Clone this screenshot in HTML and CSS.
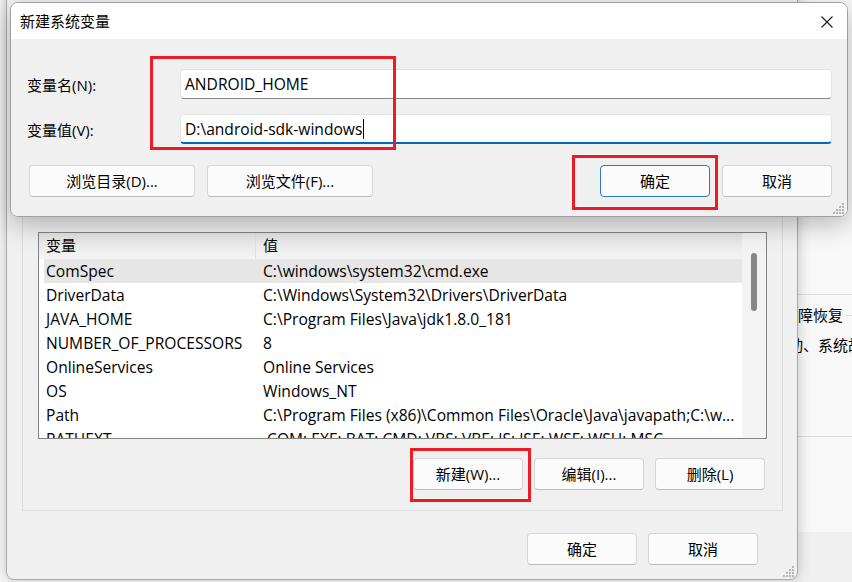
FILE: index.html
```html
<!DOCTYPE html>
<html lang="zh-CN">
<head>
    <meta charset="UTF-8">
    <meta name="viewport" content="width=device-width, initial-scale=1.0">
    <title>新建系统变量</title>
    <link rel="stylesheet" href="styles.css">
</head>
<body>
<div class="desktop">

    <!-- janela de trás (configurações do sistema) -->
    <div class="back-window">
        <div class="back-rule"></div>
        <div class="back-legend"><span>故障恢复</span><i></i></div>
        <div class="back-text">启动、系统故障</div>
        <div class="back-rule back-rule-low"></div>
        <div class="back-band"></div>
    </div>

    <!-- 环境变量 -->
    <div class="env-dialog">
        <div class="group">
            <div class="group-label">系统变量(S)</div>
            <div class="list">
                <div class="list-main">
                    <div class="list-head">
                        <div class="col-name">变量</div>
                        <div class="col-value">值</div>
                    </div>
                    <div class="row selected"><div class="col-name">ComSpec</div><div class="col-value">C:\windows\system32\cmd.exe</div></div>
                    <div class="row"><div class="col-name">DriverData</div><div class="col-value">C:\Windows\System32\Drivers\DriverData</div></div>
                    <div class="row"><div class="col-name">JAVA_HOME</div><div class="col-value">C:\Program Files\Java\jdk1.8.0_181</div></div>
                    <div class="row"><div class="col-name">NUMBER_OF_PROCESSORS</div><div class="col-value">8</div></div>
                    <div class="row"><div class="col-name">OnlineServices</div><div class="col-value">Online Services</div></div>
                    <div class="row"><div class="col-name">OS</div><div class="col-value">Windows_NT</div></div>
                    <div class="row"><div class="col-name">Path</div><div class="col-value">C:\Program Files (x86)\Common Files\Oracle\Java\javapath;C:\w...</div></div>
                    <div class="row"><div class="col-name">PATHEXT</div><div class="col-value">.COM;.EXE;.BAT;.CMD;.VBS;.VBE;.JS;.JSE;.WSF;.WSH;.MSC</div></div>
                </div>
                <div class="scrollbar"><div class="thumb"></div></div>
            </div>
            <div class="btn-row group-buttons">
                <button class="btn">新建(W)...</button>
                <button class="btn">编辑(I)...</button>
                <button class="btn">删除(L)</button>
            </div>
        </div>
        <div class="btn-row footer">
            <button class="btn">确定</button>
            <button class="btn">取消</button>
        </div>
        <svg class="grip" width="12" height="12" viewBox="0 0 12 12">
            <g fill="#b4b4b4">
                <rect x="9" y="0" width="2" height="2"/>
                <rect x="6" y="3" width="2" height="2"/><rect x="9" y="3" width="2" height="2"/>
                <rect x="3" y="6" width="2" height="2"/><rect x="6" y="6" width="2" height="2"/><rect x="9" y="6" width="2" height="2"/>
                <rect x="0" y="9" width="2" height="2"/><rect x="3" y="9" width="2" height="2"/><rect x="6" y="9" width="2" height="2"/><rect x="9" y="9" width="2" height="2"/>
            </g>
        </svg>
    </div>

    <!-- 新建系统变量 -->
    <div class="new-dialog">
        <div class="titlebar">
            <span>新建系统变量</span>
            <svg class="close" width="12" height="12" viewBox="0 0 12 12">
                <path d="M0.5 0.5 L11.5 11.5 M11.5 0.5 L0.5 11.5" stroke="#1b1b1b" stroke-width="1.1" fill="none"/>
            </svg>
        </div>
        <div class="dlg-body">
            <div class="field">
                <label>变量名(N):</label>
                <div class="input">ANDROID_HOME</div>
            </div>
            <div class="field">
                <label>变量值(V):</label>
                <div class="input focused">D:\android-sdk-windows<span class="caret"></span></div>
            </div>
            <div class="actions">
                <button class="btn btn-wide">浏览目录(D)...</button>
                <button class="btn btn-wide">浏览文件(F)...</button>
                <span class="spacer"></span>
                <button class="btn btn-default">确定</button>
                <button class="btn">取消</button>
            </div>
        </div>
        <svg class="grip" width="12" height="12" viewBox="0 0 12 12">
            <g fill="#b4b4b4">
                <rect x="9" y="0" width="2" height="2"/>
                <rect x="6" y="3" width="2" height="2"/><rect x="9" y="3" width="2" height="2"/>
                <rect x="3" y="6" width="2" height="2"/><rect x="6" y="6" width="2" height="2"/><rect x="9" y="6" width="2" height="2"/>
                <rect x="0" y="9" width="2" height="2"/><rect x="3" y="9" width="2" height="2"/><rect x="6" y="9" width="2" height="2"/><rect x="9" y="9" width="2" height="2"/>
            </g>
        </svg>
    </div>

    <!-- marcações vermelhas -->
    <div class="mark mark-fields"></div>
    <div class="mark mark-ok"></div>
    <div class="mark mark-new"></div>
</div>
</body>
</html>
```

FILE: styles.css
```css
body {
    margin: 0;
    padding: 0;
    font-family: "Open Sans", "Noto Sans CJK SC", sans-serif;
    font-size: 15px;
    color: #000;
}
.desktop {
    position: relative;
    width: 852px;
    height: 582px;
    overflow: hidden;
    background-color: #e6e6e6;
}

/* janela de trás */
.back-window {
    position: absolute;
    left: 0;
    top: 0;
    width: 852px;
    height: 582px;
    display: flex;
    flex-direction: column;
    background-color: #f8f8f8;
}
.back-rule {
    margin-top: 294px;
    margin-left: 790px;
    height: 1px;
    background-color: #dcdcdc;
}
.back-rule-low {
    margin-top: 81px;
}
.back-legend {
    display: flex;
    align-items: center;
    margin-top: 10px;
    margin-left: 783px;
    line-height: 20px;
    white-space: nowrap;
}
.back-legend i {
    flex: 1;
    height: 1px;
    margin-left: 3px;
    background-color: #dcdcdc;
}
.back-text {
    margin-top: 10px;
    margin-left: 773px;
    line-height: 20px;
    white-space: nowrap;
}
.back-band {
    margin-top: 95px;
    margin-left: 790px;
    flex: 1;
    background-color: #f0f0f0;
}

/* botões */
.btn {
    box-sizing: border-box;
    width: 110px;
    height: 32px;
    padding: 0 0 2px 0;
    font-family: inherit;
    font-size: 15px;
    color: #000;
    background-color: #fbfbfb;
    border: 1px solid #d5d5d5;
    border-bottom-color: #bdbdbd;
    border-radius: 4px;
}
.btn-wide {
    width: 166px;
}
.btn-default {
    border: 1px solid #2b78c9;
}
.btn-row {
    display: flex;
    justify-content: flex-end;
    gap: 11px;
}

/* 环境变量 */
.env-dialog {
    position: absolute;
    left: 6px;
    top: -100px;
    box-sizing: border-box;
    width: 792px;
    height: 680px;
    display: flex;
    flex-direction: column;
    justify-content: flex-end;
    padding: 0 14px 14px 15px;
    background-color: #f0f0f0;
    border: 1px solid #a9a9a9;
    border-radius: 8px;
    box-shadow: 0 0 14px rgba(0, 0, 0, 0.22);
}
.group {
    display: flex;
    flex-direction: column;
    padding: 0 15px 20px 15px;
    border: 1px solid #dcdcdc;
}
.group-label {
    align-self: flex-start;
    margin: -15px 0 0 8px;
    padding: 0 4px;
    line-height: 20px;
    background-color: #f0f0f0;
}
.group-buttons {
    margin-top: 19px;
    padding-right: 2px;
}
.footer {
    margin-top: 22px;
    padding-right: 25px;
}
.list {
    margin-top: 16px;
    height: 207px;
    box-sizing: border-box;
    display: flex;
    border: 1px solid #848484;
    background-color: #fff;
    overflow: hidden;
}
.list-main {
    flex: 1;
    padding-left: 5px;
    overflow: hidden;
}
.list-head {
    display: flex;
    height: 26px;
    line-height: 25px;
    margin-left: -5px;
    padding-left: 5px;
    background: linear-gradient(#e4e4e4, #f4f4f4);
}
.list-head .col-name {
    border-right: 1px solid #e0e0e0;
}
.row {
    display: flex;
    height: 24px;
    line-height: 24px;
    font-size: 15.6px;
    white-space: nowrap;
}
.row.selected {
    background-color: #e6e6e6;
}
.col-name {
    box-sizing: border-box;
    width: 212px;
    flex-shrink: 0;
    padding-left: 2px;
    white-space: nowrap;
}
.col-value {
    padding-left: 7px;
    white-space: nowrap;
}
.scrollbar {
    width: 24px;
    flex-shrink: 0;
    background-color: #f3f3f3;
}
.thumb {
    width: 6px;
    height: 58px;
    margin: 20px 0 0 9px;
    border-radius: 3px;
    background-color: #878787;
}
.grip {
    position: absolute;
    right: 2px;
    bottom: 1px;
}

/* 新建系统变量 */
.new-dialog {
    position: absolute;
    left: 10px;
    top: 2px;
    box-sizing: border-box;
    width: 838px;
    height: 215px;
    display: flex;
    flex-direction: column;
    border: 1px solid #a0a0a0;
    border-radius: 8px;
    overflow: hidden;
    box-shadow: 0 8px 26px rgba(0, 0, 0, 0.26);
}
.titlebar {
    height: 36px;
    flex-shrink: 0;
    display: flex;
    align-items: center;
    justify-content: space-between;
    padding: 0 14px 0 9px;
    background-color: #fff;
    line-height: 20px;
}
.close {
    margin-top: 1px;
}
.dlg-body {
    flex: 1;
    display: flex;
    flex-direction: column;
    padding: 30px 15px 0 16px;
    background-color: #f0f0f0;
}
.field {
    display: flex;
    align-items: center;
    margin-bottom: 15px;
}
.field label {
    width: 153px;
    flex-shrink: 0;
}
.input {
    flex: 1;
    box-sizing: border-box;
    height: 30px;
    display: flex;
    align-items: center;
    padding: 0 4px;
    font-size: 15.6px;
    background-color: #fff;
    border: 1px solid #e3e3e3;
    border-bottom-color: #8a8a8a;
    border-radius: 4px;
    white-space: nowrap;
}
.input.focused {
    border-bottom: 2px solid #0067c0;
    padding-top: 1px;
}
.caret {
    width: 1px;
    height: 20px;
    margin-left: 1px;
    background-color: #000;
}
.actions {
    display: flex;
    gap: 12px;
    margin-top: 6px;
    padding-left: 2px;
}
.spacer {
    flex: 1;
}

/* marcações */
.mark {
    position: absolute;
    box-sizing: border-box;
    border: 3px solid #ec1c24;
}
.mark-fields {
    left: 150px;
    top: 56px;
    width: 246px;
    height: 94px;
}
.mark-ok {
    left: 572px;
    top: 155px;
    width: 146px;
    height: 55px;
}
.mark-new {
    left: 410px;
    top: 448px;
    width: 121px;
    height: 54px;
}
```
